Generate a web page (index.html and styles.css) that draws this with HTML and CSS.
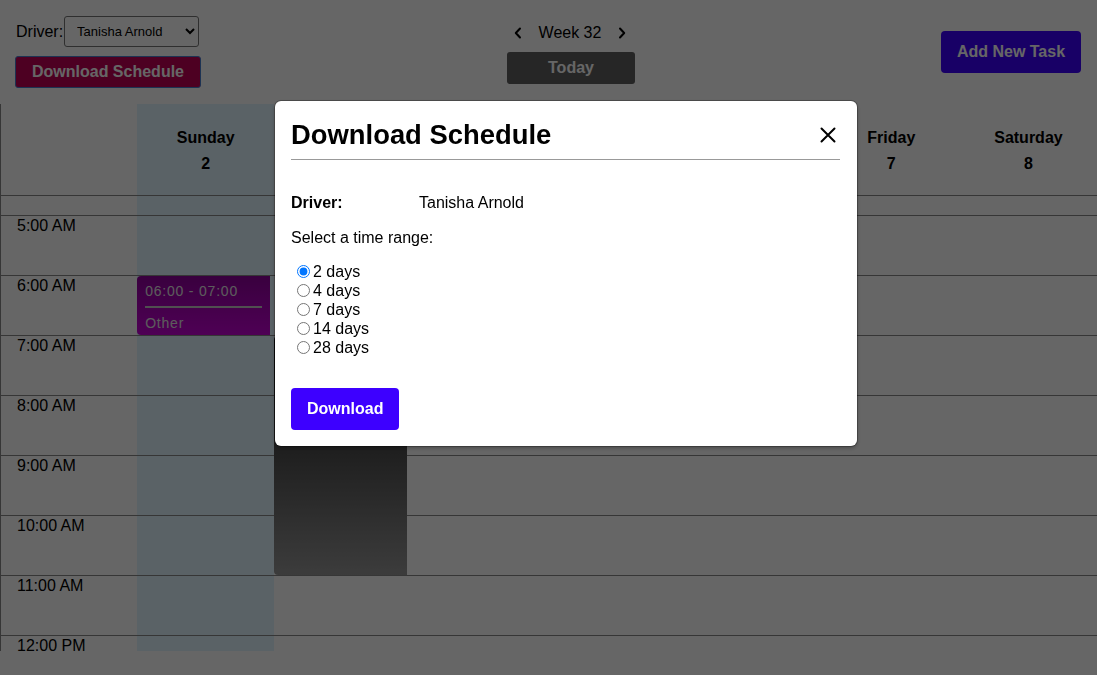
FILE: index.html
```html
<!DOCTYPE html>
<html lang="en">
<head>
<meta charset="utf-8">
<title>Driver Schedule</title>
<link rel="stylesheet" href="styles.css">
</head>
<body>
<div class="page">
  <header class="topbar">
    <div class="left-group">
      <div class="driver-row">
        <label class="driver-label" for="driver">Driver:</label>
        <select id="driver" class="driver-select">
          <option>Tanisha Arnold</option>
        </select>
      </div>
      <button class="btn btn-schedule">Download Schedule</button>
    </div>
    <div class="center-group">
      <div class="week-nav">
        <button class="chev" aria-label="Previous week">
          <svg width="10" height="12" viewBox="0 0 10 12"><path d="M7 1.5 L2.8 6 L7 10.5" fill="none" stroke="#000" stroke-width="2" stroke-linecap="round" stroke-linejoin="round"/></svg>
        </button>
        <span class="week-label">Week 32</span>
        <button class="chev" aria-label="Next week">
          <svg width="10" height="12" viewBox="0 0 10 12"><path d="M3 1.5 L7.2 6 L3 10.5" fill="none" stroke="#000" stroke-width="2" stroke-linecap="round" stroke-linejoin="round"/></svg>
        </button>
      </div>
      <button class="btn btn-today">Today</button>
    </div>
    <button class="btn btn-add">Add New Task</button>
  </header>

  <div class="calendar">
    <div class="col gutter">
      <div class="col-head"></div>
      <div class="col-body">
        <div class="spacer"></div>
        <div class="hour"><span class="time">5:00 AM</span></div>
        <div class="hour"><span class="time">6:00 AM</span></div>
        <div class="hour"><span class="time">7:00 AM</span></div>
        <div class="hour"><span class="time">8:00 AM</span></div>
        <div class="hour"><span class="time">9:00 AM</span></div>
        <div class="hour"><span class="time">10:00 AM</span></div>
        <div class="hour"><span class="time">11:00 AM</span></div>
        <div class="hour"><span class="time">12:00 PM</span></div>
        <div class="hour"><span class="time">1:00 PM</span></div>
      </div>
    </div>

    <div class="col day is-today">
      <div class="col-head"><div class="day-name">Sunday</div><div class="day-num">2</div></div>
      <div class="col-body">
        <div class="spacer"></div>
        <div class="hour"></div><div class="hour"></div><div class="hour"></div><div class="hour"></div>
        <div class="hour"></div><div class="hour"></div><div class="hour"></div><div class="hour"></div><div class="hour"></div>
        <div class="event event-other" style="top:80px;height:59px">
          <div class="event-time">06:00 - 07:00</div>
          <div class="event-type">Other</div>
        </div>
      </div>
    </div>

    <div class="col day">
      <div class="col-head"><div class="day-name">Monday</div><div class="day-num">3</div></div>
      <div class="col-body">
        <div class="spacer"></div>
        <div class="hour"></div><div class="hour"></div><div class="hour"></div><div class="hour"></div>
        <div class="hour"></div><div class="hour"></div><div class="hour"></div><div class="hour"></div><div class="hour"></div>
        <div class="event event-dark" style="top:140px;height:239px">
          <div class="event-time">07:00 - 11:00</div>
          <div class="event-type">Pickup</div>
        </div>
      </div>
    </div>

    <div class="col day">
      <div class="col-head"><div class="day-name">Tuesday</div><div class="day-num">4</div></div>
      <div class="col-body">
        <div class="spacer"></div>
        <div class="hour"></div><div class="hour"></div><div class="hour"></div><div class="hour"></div>
        <div class="hour"></div><div class="hour"></div><div class="hour"></div><div class="hour"></div><div class="hour"></div>
      </div>
    </div>

    <div class="col day">
      <div class="col-head"><div class="day-name">Wednesday</div><div class="day-num">5</div></div>
      <div class="col-body">
        <div class="spacer"></div>
        <div class="hour"></div><div class="hour"></div><div class="hour"></div><div class="hour"></div>
        <div class="hour"></div><div class="hour"></div><div class="hour"></div><div class="hour"></div><div class="hour"></div>
      </div>
    </div>

    <div class="col day">
      <div class="col-head"><div class="day-name">Thursday</div><div class="day-num">6</div></div>
      <div class="col-body">
        <div class="spacer"></div>
        <div class="hour"></div><div class="hour"></div><div class="hour"></div><div class="hour"></div>
        <div class="hour"></div><div class="hour"></div><div class="hour"></div><div class="hour"></div><div class="hour"></div>
      </div>
    </div>

    <div class="col day">
      <div class="col-head"><div class="day-name">Friday</div><div class="day-num">7</div></div>
      <div class="col-body">
        <div class="spacer"></div>
        <div class="hour"></div><div class="hour"></div><div class="hour"></div><div class="hour"></div>
        <div class="hour"></div><div class="hour"></div><div class="hour"></div><div class="hour"></div><div class="hour"></div>
      </div>
    </div>

    <div class="col day">
      <div class="col-head"><div class="day-name">Saturday</div><div class="day-num">8</div></div>
      <div class="col-body">
        <div class="spacer"></div>
        <div class="hour"></div><div class="hour"></div><div class="hour"></div><div class="hour"></div>
        <div class="hour"></div><div class="hour"></div><div class="hour"></div><div class="hour"></div><div class="hour"></div>
      </div>
    </div>
  </div>
</div>

<div class="overlay">
  <div class="modal" role="dialog" aria-labelledby="modal-title">
    <div class="modal-header">
      <h2 id="modal-title" class="modal-title">Download Schedule</h2>
      <button class="modal-close" aria-label="Close">
        <svg width="16" height="16" viewBox="0 0 16 16"><path d="M1.5 1.5 L14.5 14.5 M14.5 1.5 L1.5 14.5" stroke="#000" stroke-width="2" stroke-linecap="round"/></svg>
      </button>
    </div>
    <div class="modal-body">
      <div class="info-row">
        <span class="info-label">Driver:</span>
        <span class="info-value">Tanisha Arnold</span>
      </div>
      <p class="range-title">Select a time range:</p>
      <div class="range-list">
        <label class="range-option"><input type="radio" name="range" checked>2 days</label>
        <label class="range-option"><input type="radio" name="range">4 days</label>
        <label class="range-option"><input type="radio" name="range">7 days</label>
        <label class="range-option"><input type="radio" name="range">14 days</label>
        <label class="range-option"><input type="radio" name="range">28 days</label>
      </div>
      <button class="btn btn-download">Download</button>
    </div>
  </div>
</div>
</body>
</html>
```

FILE: styles.css
```css
* {
  box-sizing: border-box;
}

html, body {
  margin: 0;
  padding: 0;
}

body {
  font-family: "Liberation Sans", Arial, sans-serif;
  font-size: 16px;
  color: #000;
  background: #fff;
  height: 675px;
  overflow: hidden;
}

.page {
  display: flex;
  flex-direction: column;
  gap: 16px;
}

/* ---------- top bar ---------- */
.topbar {
  display: flex;
  justify-content: space-between;
  align-items: flex-start;
  padding: 16px 16px 0 15px;
}

.left-group {
  display: flex;
  flex-direction: column;
  gap: 9px;
}

.driver-row {
  display: flex;
  align-items: center;
  height: 31px;
  padding-left: 1px;
}

.driver-label {
  font-size: 16px;
}

.driver-select {
  margin-left: 1px;
  width: 135px;
  height: 31px;
  font-family: "Liberation Sans", Arial, sans-serif;
  font-size: 13px;
  color: #000;
  background: #fff;
  border: 1px solid #767676;
  border-radius: 3px;
  padding: 0 4px 0 8px;
}

.btn {
  font-family: "Liberation Sans", Arial, sans-serif;
  font-weight: bold;
  font-size: 16px;
  color: #fff;
  border: none;
  cursor: pointer;
}

.btn-schedule {
  width: 186px;
  height: 32px;
  background: #c00055;
  border: 1px solid #4a7fd0;
  border-radius: 3px;
  padding: 0;
}

.center-group {
  display: flex;
  flex-direction: column;
  align-items: center;
  gap: 3px;
}

.week-nav {
  display: flex;
  align-items: center;
  height: 33px;
  padding-top: 1px;
  margin-left: -2px;
}

.chev {
  background: none;
  border: none;
  padding: 0 8px;
  height: 24px;
  display: flex;
  align-items: center;
}

.week-label {
  padding: 0 8px;
  font-size: 16px;
}

.btn-today {
  width: 128px;
  height: 32px;
  background: #5f5f5f;
  border-radius: 3px;
}

.btn-add {
  margin-top: 15px;
  width: 140px;
  height: 42px;
  background: #3d00ff;
  border-radius: 4px;
}

/* ---------- calendar ---------- */
.calendar {
  display: grid;
  grid-template-columns: repeat(8, 1fr);
  height: 547px;
  overflow: hidden;
}

.col {
  display: flex;
  flex-direction: column;
  min-width: 0;
}

.gutter {
  border-left: 1px solid #888;
}

.is-today {
  background: #e1f5fe;
}

.col-head {
  height: 92px;
  flex: none;
  border-bottom: 1px solid #888;
  padding-top: 21px;
  text-align: center;
  font-weight: bold;
  line-height: 26px;
}

.col-body {
  position: relative;
}

.spacer {
  height: 19px;
}

.hour {
  height: 60px;
  border-top: 1px solid #888;
}

.time {
  display: block;
  padding: 1px 0 0 16px;
  line-height: 18px;
  white-space: nowrap;
}

.event {
  position: absolute;
  left: 0;
  width: 133px;
  border-radius: 4px 0 0 4px;
  padding: 6px 8px 0;
  color: #e6e6e6;
  font-size: 14px;
  letter-spacing: 0.8px;
  line-height: 18px;
}

.event-other {
  background: linear-gradient(to bottom, #8f009c, #c400d4);
}

.event-dark {
  background: linear-gradient(to bottom, #0b0b0b, #969696);
}

.event-time {
  padding-bottom: 6px;
  border-bottom: 2px solid #c8c8c8;
}

.event-type {
  padding-top: 6px;
}

/* ---------- modal ---------- */
.overlay {
  position: fixed;
  inset: 0;
  background: rgba(0, 0, 0, 0.6);
}

.modal {
  position: absolute;
  left: 275px;
  top: 101px;
  width: 582px;
  height: 345px;
  background: #fff;
  border-radius: 6px;
  padding: 17px 17px 16px 16px;
  box-shadow: 0 0 0 1px rgba(0, 0, 0, 0.25), 0 2px 4px rgba(0, 0, 0, 0.3);
}

.modal-header {
  display: flex;
  justify-content: space-between;
  align-items: center;
  padding-bottom: 7px;
  border-bottom: 1px solid #999;
}

.modal-title {
  margin: 0;
  font-size: 27.4px;
  line-height: 34px;
  font-weight: bold;
}

.modal-close {
  background: none;
  border: none;
  padding: 0;
  margin-right: 4px;
  width: 16px;
  height: 16px;
  display: flex;
}

.modal-body {
  display: flex;
  flex-direction: column;
  align-items: flex-start;
}

.info-row {
  display: flex;
  margin-top: 33px;
  line-height: 19px;
}

.info-label {
  width: 128px;
  font-weight: bold;
}

.range-title {
  margin: 16px 0 0;
  line-height: 19px;
}

.range-list {
  display: flex;
  flex-direction: column;
  margin-top: 15px;
}

.range-option {
  display: flex;
  align-items: center;
  height: 19px;
  line-height: 19px;
}

.range-option input {
  margin: 0 3px 0 6px;
  width: 13px;
  height: 13px;
}

.btn-download {
  margin-top: 31px;
  height: 42px;
  padding: 0 16px;
  background: #3d00ff;
  border-radius: 4px;
}
```
